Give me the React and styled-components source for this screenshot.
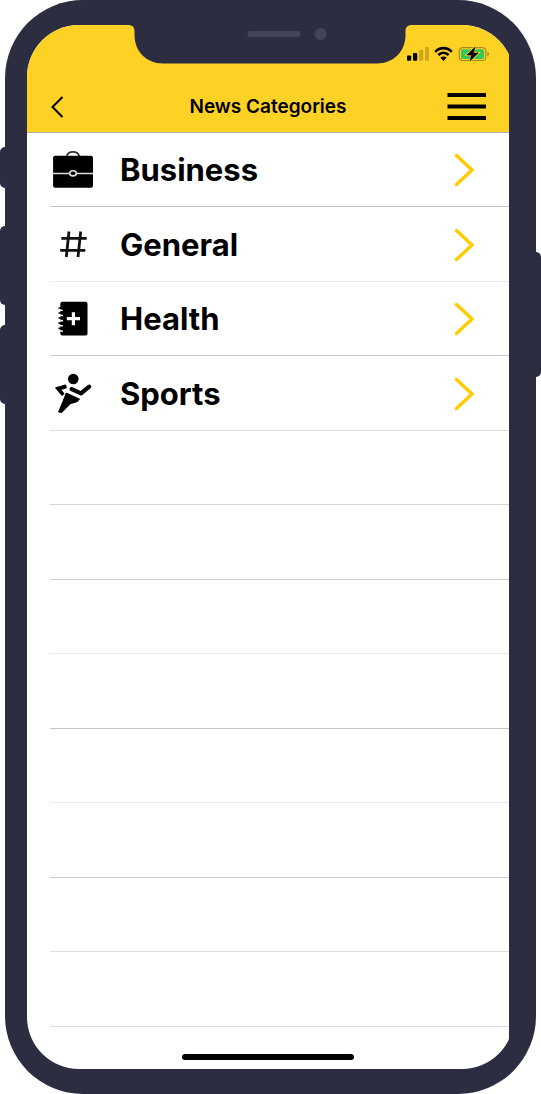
import React from "react";
import styled, { createGlobalStyle } from "styled-components";

const frame = "#2d2d42";
const yellow = "#fed225";

const GlobalStyle = createGlobalStyle`
  * { box-sizing: border-box; }
  body { margin: 0; background: #fff; font-family: Inter, "Liberation Sans", sans-serif; color: #000; }
`;

const Phone = styled.main`
  position: relative;
  margin: 0 5px;
  padding: 25px 22px;
  border-radius: 78px;
  background: ${frame};
`;

const SideButton = styled.span`
  position: absolute;
  ${(p) => (p.$side === "left" ? "left: -5px" : "right: -5px")};
  top: ${(p) => p.$top}px;
  width: 12px;
  height: ${(p) => p.$length}px;
  border-radius: 5px;
  background: ${frame};
`;

const Notch = styled.svg`
  position: absolute;
  top: 24px;
  left: 50%;
  margin-left: -143px;
  width: 284px;
  height: 40px;
`;

const Display = styled.div`
  overflow: hidden;
  padding-right: 5px;
  border-radius: 52px;
`;

const Screen = styled.div`
  background: #fff;
`;

const Header = styled.header`
  background: ${yellow};
  border-bottom: 1px solid #b1b0ab;
`;

const StatusBar = styled.div`
  display: flex;
  justify-content: flex-end;
  gap: 5px;
  height: 56px;
  padding: 21px 19px 0 0;
`;

const NavBar = styled.div`
  display: grid;
  grid-template-columns: 1fr auto 1fr;
  align-items: center;
  height: 51px;
  padding: 0 23px;
`;

const Title = styled.h1`
  margin: 0;
  font-size: 19px;
  line-height: 24px;
  font-weight: 600;
`;

const IconButton = styled.button`
  display: flex;
  justify-self: ${(p) => p.$align};
  padding: 0;
  border: 0;
  background: none;
  color: inherit;
  cursor: pointer;
`;

const List = styled.ul`
  margin: 0;
  padding: 0 0 0 23px;
  list-style: none;
`;

const Row = styled.li`
  height: 74px;
  border-bottom: 1px solid ${(p) => p.$line};
  &:nth-child(even) { height: 75px; }
`;

const RowLink = styled.a`
  display: flex;
  align-items: center;
  height: 100%;
  padding: 1px 35px 0 1px;
  color: inherit;
  text-decoration: none;
`;

const Label = styled.span`
  flex: 1;
  margin-left: 25px;
  font-size: 31px;
  line-height: 40px;
  font-weight: 700;
`;

const HomeArea = styled.div`
  display: flex;
  justify-content: center;
  padding: 27px 0 9px;
`;

const HomeBar = styled.span`
  width: 172px;
  height: 6px;
  border-radius: 3px;
  background: #000;
`;

const Icon = ({ children }) => (
  <svg width="44" height="44" viewBox="0 0 44 44" aria-hidden="true">
    {children}
  </svg>
);

const Briefcase = () => (
  <Icon>
    <path d="M15.8 8.2C17 2.5 27 2.5 28.2 8.2" fill="none" stroke="#333" strokeWidth="1.7" />
    <rect x="2.1" y="7.8" width="39.9" height="31.9" rx="2" />
    <path d="M2 25.5H42" stroke="#ddd" strokeWidth="1.4" />
    <ellipse cx="22" cy="25.3" rx="3.4" ry="2.6" stroke="#ddd" strokeWidth="1.6" />
  </Icon>
);

const Hash = () => (
  <Icon>
    <path
      d="M18 8.5L15.3 34M29.7 8.5L27 34M10.3 15.4H35.7M9.2 27.4H34.3"
      fill="none"
      stroke="#111"
      strokeWidth="2.8"
    />
  </Icon>
);

const HealthBook = () => (
  <Icon>
    <rect x="9.3" y="4.7" width="27.2" height="33.8" rx="2" />
    <path d="M7 13.2H12M7 18.4H12M7 23.6H12M7 28.8H12M7 34H12" stroke="#fff" strokeWidth="1.6" />
    <path d="M7.5 11H11L12 12.6M7.5 16H11L12 17.6M7.5 21H11L12 22.6M7.5 26.2H11L12 27.8M7.5 31.4H11L12 33" fill="none" stroke="#000" strokeWidth="1.7" />
    <path d="M15.8 21.7H29M22.4 15.2V28.2" stroke="#fff" strokeWidth="3.2" />
  </Icon>
);

const Runner = () => (
  <Icon>
    <circle cx="22.3" cy="7" r="5.3" />
    <path
      d="M4.8 15.8L14.6 13.2L15.2 15.8L9.4 17.6L12.8 21.7L11 23.2Z"
      stroke="#000"
      strokeWidth="1.2"
      strokeLinejoin="round"
    />
    <path d="M20.6 17.1L30 21.3L38.2 14.6" fill="none" stroke="#000" strokeWidth="4.2" strokeLinecap="round" strokeLinejoin="round" />
    <path
      d="M15.4 21.6L28 27.2L25.6 29.6L18.8 31.6L10.4 40.2L8 39.8L12.6 28.8Z"
      stroke="#000"
      strokeWidth="1.6"
      strokeLinejoin="round"
    />
  </Icon>
);

const Chevron = () => (
  <svg width="20" height="36" viewBox="0 0 20 36" aria-hidden="true">
    <path d="M2.5 3.5L18 18L2.5 32.5" fill="none" stroke="#fc0" strokeWidth="3.4" strokeLinecap="round" />
  </svg>
);

const Signal = () => (
  <svg width="22" height="16" viewBox="0 0 22 16" role="img" aria-label="Signal strength">
    <rect x="0" y="9.5" width="4.2" height="5.3" rx="1" />
    <rect x="6" y="7" width="4.2" height="7.8" rx="1" />
    <rect x="12" y="4" width="4.2" height="10.8" rx="1" fill="#cda81d" />
    <rect x="18" y="1" width="4" height="13.8" rx="1" fill="#cda81d" />
  </svg>
);

const Wifi = () => (
  <svg width="19" height="16" viewBox="0 0 19 16" role="img" aria-label="Wi-Fi">
    <path d="M1.2 5.8C6 .9 13 .9 17.8 5.8M4.3 9C7.4 6.1 11.6 6.1 14.7 9" fill="none" stroke="#000" strokeWidth="2.6" />
    <path d="M6.3 11.6C8.2 10 10.8 10 12.7 11.6L9.5 14.9Z" />
  </svg>
);

const Battery = () => (
  <svg width="32" height="16" viewBox="0 0 32 16" role="img" aria-label="Battery charging">
    <rect x="1.2" y="1.7" width="26.6" height="12.8" rx="3.5" fill="none" stroke="#a98b19" strokeWidth="1.2" />
    <rect x="3" y="3.2" width="23" height="9.8" rx="1.8" fill="#34c759" />
    <path d="M29.3 5.8C31.6 6.5 31.6 9.7 29.3 10.4Z" fill="#a98b19" />
    <path d="M17.2.9L8.8 9.1H13.5L11.8 15.2L20.3 6.9H15.4Z" stroke={yellow} strokeWidth="2" />
    <path d="M17.2.9L8.8 9.1H13.5L11.8 15.2L20.3 6.9H15.4Z" stroke="#000" strokeWidth=".5" />
  </svg>
);

const rows = [
  { label: "Business", icon: Briefcase, line: "#c2c2c2" },
  { label: "General", icon: Hash, line: "#ececec" },
  { label: "Health", icon: HealthBook, line: "#cccccc" },
  { label: "Sports", icon: Runner, line: "#dfdfdf" },
  { line: "#d5d5d5" },
  { line: "#d2d2d2" },
  { line: "#e9e9e9" },
  { line: "#c4c4c4" },
  { line: "#ececec" },
  { line: "#cacaca" },
  { line: "#e0e0e0" },
  { line: "#dddddd" },
];

export default function App() {
  return (
    <>
      <GlobalStyle />
      <Phone>
        <SideButton $side="left" $top={147} $length={41} />
        <SideButton $side="left" $top={226} $length={79} />
        <SideButton $side="left" $top={325} $length={79} />
        <SideButton $side="right" $top={252} $length={125} />
        <Display>
          <Screen>
            <Header>
              <StatusBar>
                <Signal />
                <Wifi />
                <Battery />
              </StatusBar>
              <NavBar>
                <IconButton $align="start" aria-label="Back">
                  <svg width="16" height="24" viewBox="0 0 16 24">
                    <path d="M12.5 2L2.5 12L12.5 22" fill="none" stroke="#000" strokeWidth="2" />
                  </svg>
                </IconButton>
                <Title>News Categories</Title>
                <IconButton $align="end" aria-label="Menu">
                  <svg width="39" height="28" viewBox="0 0 39 28">
                    <path d="M.5 2H39M.5 13.5H39M.5 25H39" stroke="#000" strokeWidth="3.8" />
                  </svg>
                </IconButton>
              </NavBar>
            </Header>
            <List>
              {rows.map(({ label, icon: RowIcon, line }, i) => (
                <Row key={i} $line={line}>
                  {label && (
                    <RowLink href={`#${label.toLowerCase()}`}>
                      <RowIcon />
                      <Label>{label}</Label>
                      <Chevron />
                    </RowLink>
                  )}
                </Row>
              ))}
            </List>
            <HomeArea>
              <HomeBar />
            </HomeArea>
          </Screen>
        </Display>
        <Notch viewBox="0 0 284 40" aria-hidden="true">
          <path
            d="M0 0V1C4 1 6.5 3 6.5 7V11C6.5 27 18 39.5 35 39.5H249C266 39.5 277.5 27 277.5 11V7C277.5 3 280 1 284 1V0Z"
            fill={frame}
          />
          <rect x="119.5" y="7" width="53" height="6" rx="3" fill="#444459" />
          <circle cx="192.5" cy="10" r="6" fill="#444459" />
        </Notch>
      </Phone>
    </>
  );
}
